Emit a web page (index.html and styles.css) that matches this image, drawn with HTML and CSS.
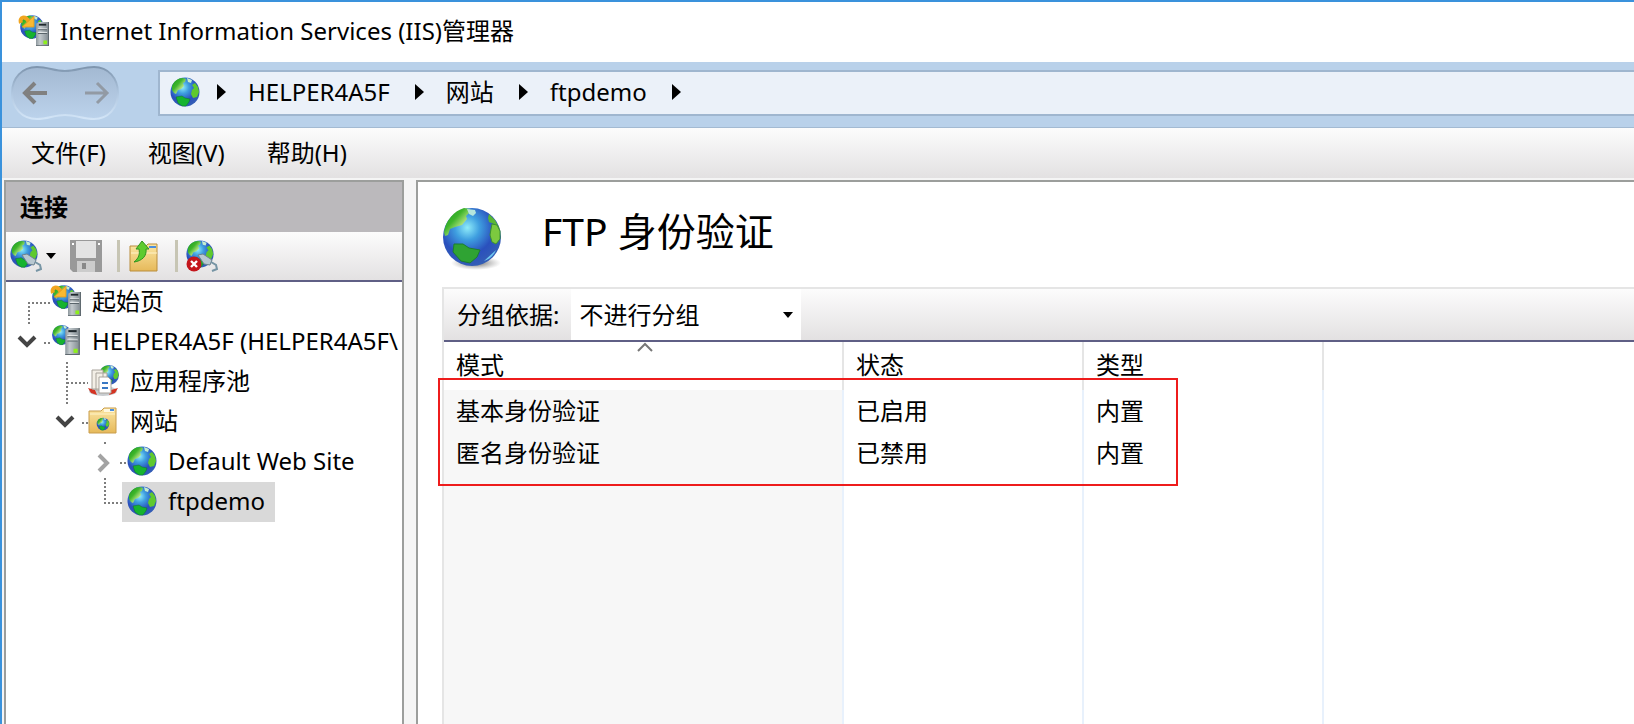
FILE: index.html
```html
<!DOCTYPE html>
<html lang="zh-CN">
  <head>
    <meta charset="UTF-8">
    <meta name="viewport" content="width=device-width, initial-scale=1.0">
    <title>Internet Information Services (IIS)管理器</title>
    <link rel="stylesheet" href="styles.css">
  </head>
  <body>
    <!-- shared icons -->
    <svg class="sprite" aria-hidden="true">
      <defs>
        <radialGradient id="sea" cx="0.42" cy="0.34" r="0.7">
          <stop offset="0" stop-color="#8fecfa"/>
          <stop offset="0.3" stop-color="#3f9fe0"/>
          <stop offset="0.65" stop-color="#2a50bd"/>
          <stop offset="1" stop-color="#3560b4"/>
        </radialGradient>
        <linearGradient id="land" x1="0" y1="0" x2="1" y2="1">
          <stop offset="0" stop-color="#169a1c"/>
          <stop offset="0.4" stop-color="#3fb52c"/>
          <stop offset="0.7" stop-color="#c4ea8e"/>
          <stop offset="1" stop-color="#3fae2c"/>
        </linearGradient>
        <linearGradient id="metal" x1="0" y1="0" x2="1" y2="0">
          <stop offset="0" stop-color="#8d979d"/>
          <stop offset="0.3" stop-color="#c3cacd"/>
          <stop offset="1" stop-color="#7e888e"/>
        </linearGradient>
        <linearGradient id="paper" x1="0" y1="0" x2="0" y2="1">
          <stop offset="0" stop-color="#fbe6a4"/>
          <stop offset="1" stop-color="#e6b95a"/>
        </linearGradient>
        <radialGradient id="shade">
          <stop offset="0" stop-color="#555" stop-opacity="0.9"/>
          <stop offset="1" stop-color="#888" stop-opacity="0"/>
        </radialGradient>
      </defs>
      <symbol id="globe" viewBox="-1 -1 32 32">
        <circle cx="15" cy="15" r="14.5" fill="url(#sea)"/>
        <path d="M2 9C4 4 8 1 13 1l3 1-1 3-2 1 1 3-3 3-3 1-2 4-2-1-2-3z" fill="url(#land)"/>
        <path d="M17 1l5 2-1 3-3-1z" fill="#c6eed0"/>
        <path d="M22 8l3-2 3 4 1 5-2 5-4 1-2-4 1-4 2-2z" fill="#5fc92e"/>
        <path d="M6 20l6-1 3 2 5 1-1 3-3 4-4 0-4-3z" fill="#16b32f" stroke="#12702f" stroke-width="0.5"/>
      </symbol>
      <symbol id="server" viewBox="0 0 14 28">
        <path d="M0 3l3-2h11v26H0z" fill="url(#metal)"/>
        <path d="M13 1h1v26H0v-1h13z" fill="#5e686e"/>
        <path d="M3 3h8v2H3z" fill="#20292e"/>
        <path d="M2 8h10v1H2zM2 12h10v1H2z" fill="#f1f3f4"/>
        <path d="M2 9h10v1H2zM2 13h10v1H2z" fill="#59646a"/>
        <path d="M8 21h4v4H8z" fill="#8df01b"/>
      </symbol>
      <symbol id="start" viewBox="0 0 32 32">
        <use href="#globe" x="1" y="-1" width="26" height="26"/>
        <path d="M3 8C1 2 7 0 11 7" fill="none" stroke="#f2a51f" stroke-width="4"/>
        <path d="M16 1v11H4z" fill="#f9b932" stroke="#e0951a" stroke-width="0.8"/>
        <use href="#server" x="17" y="6" width="15" height="26"/>
      </symbol>
      <symbol id="host" viewBox="0 0 32 32">
        <use href="#globe" x="1" y="-1" width="22" height="22"/>
        <use href="#server" x="15" y="2" width="15" height="29"/>
      </symbol>
      <symbol id="pool" viewBox="0 0 32 32">
        <use href="#globe" x="10" y="-1" width="22" height="22"/>
        <ellipse cx="15" cy="26" rx="14" ry="5" fill="#c9cdd0"/>
        <path d="M0 23l7 2 2 5-6-2zM30 23l-7 2-2 5 6-2z" fill="#d43322"/>
        <path d="M4 5h11v19H4zM8 8h11v17H8z" fill="#f3efe7" stroke="#a8a39b"/>
        <path d="M11 12h9l3 3v13H11z" fill="#fff" stroke="#a8a39b"/>
        <path d="M14 17h6v2h-6zM14 22h6v2h-6z" fill="#3a78c4"/>
      </symbol>
      <symbol id="sites" viewBox="0 0 32 32">
        <path d="M1 6h12l3-3h12v25H1z" fill="url(#paper)" stroke="#c99d4c"/>
        <path d="M16 4h10v3H16z" fill="#fff8df"/>
        <path d="M22 4h4v2h-4z" fill="#4a8ede"/>
        <path d="M2 9h25" stroke="#fff3c8"/>
        <use href="#globe" x="8" y="12" width="14" height="14"/>
      </symbol>
      <symbol id="plug" viewBox="0 0 32 32">
        <use href="#globe" x="-1" y="-1" width="30" height="30"/>
        <path d="M12 15l5-1 9 6-2 5-6-1z" fill="#b9c8d1" stroke="#6e828f"/>
        <path d="M25 22l5 3 1 4-5 2" fill="none" stroke="#7795a5" stroke-width="2"/>
      </symbol>
      <symbol id="unplug" viewBox="0 0 32 32">
        <use href="#plug" width="32" height="32"/>
        <circle cx="8" cy="24" r="7.5" fill="#c4161c"/>
        <path d="M5 21l6 6M11 21l-6 6" stroke="#fff" stroke-width="2.4"/>
      </symbol>
      <symbol id="save" viewBox="0 0 32 32">
        <path d="M0 0h32v32H3l-3-3z" fill="#999"/>
        <path d="M6 1h20v17H6z" fill="#e3e3e3"/>
        <path d="M7 21h18v11H7z" fill="#ccc"/>
        <path d="M12 23h4v6h-4z" fill="#888"/>
        <path d="M2 3h2v2H2zM28 3h2v2h-2z" fill="#fff"/>
      </symbol>
      <symbol id="up" viewBox="0 0 32 32">
        <path d="M2 6h16l2-2h9v27H2z" fill="url(#paper)" stroke="#b98d3c"/>
        <path d="M21 6h7v2h-7z" fill="#4a8ede"/>
        <path d="M3 13h26" stroke="#fff3c8"/>
        <path d="M14 1l7 8h-3c1 7-4 12-12 13 5-4 6-8 5-13H8z" fill="#5ecb2f" stroke="#2f9420"/>
      </symbol>
    </svg>

    <div class="window">
      <header class="titlebar">
        <svg class="icon"><use href="#start"/></svg>
        <span>Internet Information Services (IIS)管理器</span>
      </header>

      <nav class="navbar">
        <div class="history">
          <svg class="history-shape" viewBox="0 0 110 56">
            <defs>
              <linearGradient id="rim" x1="0" y1="0" x2="0" y2="1">
                <stop offset="0" stop-color="#7e95ae"/>
                <stop offset="0.5" stop-color="#b0c7e0"/>
                <stop offset="1" stop-color="#d3e5f7"/>
              </linearGradient>
              <linearGradient id="well" x1="0" y1="0" x2="0" y2="1">
                <stop offset="0" stop-color="#a3b9d2"/>
                <stop offset="1" stop-color="#bcd3ec"/>
              </linearGradient>
            </defs>
            <path d="M27 2C38 2 44 6 55 6S73 2 84 2c14 0 24 11 24 26S98 54 84 54c-11 0-18-4-29-4s-17 4-28 4C12 54 2 43 2 28S12 2 27 2z" fill="url(#well)" stroke="url(#rim)" stroke-width="2"/>
          </svg>
          <button class="arrow" aria-label="后退">
            <svg viewBox="0 0 26 24"><path d="M25 12H3M13 2L3 12l10 10" fill="none" stroke="#808080" stroke-width="4"/></svg>
          </button>
          <button class="arrow" aria-label="前进">
            <svg viewBox="0 0 26 24"><path d="M1 12h22M13 2l10 10-10 10" fill="none" stroke="#929aa4" stroke-width="3"/></svg>
          </button>
        </div>
        <div class="address">
          <svg class="icon"><use href="#globe"/></svg>
          <i class="sep"></i>
          <a href="#">HELPER4A5F</a>
          <i class="sep"></i>
          <a href="#">网站</a>
          <i class="sep"></i>
          <a href="#">ftpdemo</a>
          <i class="sep"></i>
        </div>
      </nav>

      <div class="menubar">
        <button>文件(F)</button>
        <button>视图(V)</button>
        <button>帮助(H)</button>
      </div>

      <div class="content">
        <aside class="connections">
          <h2>连接</h2>
          <div class="tools">
            <button class="tool drop" aria-label="连接"><svg class="tool-icon"><use href="#plug"/></svg><i class="down"></i></button>
            <button class="tool" aria-label="保存"><svg class="tool-icon"><use href="#save"/></svg></button>
            <i class="divider"></i>
            <button class="tool" aria-label="向上"><svg class="tool-icon"><use href="#up"/></svg></button>
            <i class="divider"></i>
            <button class="tool" aria-label="断开"><svg class="tool-icon"><use href="#unplug"/></svg></button>
          </div>
          <ul class="tree">
            <li>
              <svg class="branch" viewBox="0 0 44 40"><path class="dots" d="M44 21H23v21"/></svg>
              <span class="node"><svg class="icon"><use href="#start"/></svg>起始页</span>
            </li>
            <li>
              <svg class="branch" viewBox="0 0 44 40"><path class="dots" d="M38 21h6"/><path class="open" d="M13 15l8 8 8-8"/></svg>
              <span class="node"><svg class="icon"><use href="#host"/></svg>HELPER4A5F (HELPER4A5F\</span>
            </li>
            <li class="level2">
              <svg class="branch" viewBox="0 0 44 40"><path class="dots" d="M23 0v42M23 21h21"/></svg>
              <span class="node"><svg class="icon"><use href="#pool"/></svg>应用程序池</span>
            </li>
            <li class="level2">
              <svg class="branch" viewBox="0 0 44 40"><path class="dots" d="M38 21h6"/><path class="open" d="M13 15l8 8 8-8"/></svg>
              <span class="node"><svg class="icon"><use href="#sites"/></svg>网站</span>
            </li>
            <li class="level3">
              <svg class="branch" viewBox="0 0 44 40"><path class="dots" d="M23 0v3M38 21h6"/><path class="closed" d="M17 13l8 8-8 8"/></svg>
              <span class="node"><svg class="icon"><use href="#globe"/></svg>Default Web Site</span>
            </li>
            <li class="level3">
              <svg class="branch" viewBox="0 0 44 40"><path class="dots" d="M23-4v25h21"/></svg>
              <span class="node selected"><svg class="icon"><use href="#globe"/></svg>ftpdemo</span>
            </li>
          </ul>
        </aside>

        <main class="feature">
          <div class="heading">
            <svg class="big-globe" viewBox="0 0 60 64">
              <ellipse cx="34" cy="56" rx="25" ry="7" fill="url(#shade)"/>
              <circle cx="30" cy="30" r="29" fill="url(#sea)"/>
              <path d="M2 25C4 13 12 4 22 1l6 1-1 4-3 3 1 3-5 6-7 2-5 2-2 6-3 1z" fill="url(#land)"/>
              <path d="M25 2l8 1 1 3-3 3-4-2z" fill="#b5e6dd"/>
              <path d="M47 7l6 6 5 9-6-5-5-2-1-4z" fill="#58b635"/>
              <path d="M50 17l5 1 3 6v8l-4 5-4-2-2-7 1-6z" fill="#7cc93f" stroke="#3b9130"/>
              <path d="M12 37l9 0 6 4 11 2-3 7-7 6-9-2-8-9z" fill="#2fa333" stroke="#1c7d31"/>
              <path d="M42 54l12-11c-2 5-6 9-12 11z" fill="#6fc8f0"/>
            </svg>
            <h1>FTP 身份验证</h1>
          </div>

          <div class="list">
            <div class="groupbar">
              <label for="group">分组依据:</label>
              <span class="combo">
                <select id="group"><option>不进行分组</option></select>
                <i class="down"></i>
              </span>
            </div>
            <table>
              <thead>
                <tr>
                  <th class="sorted">模式<svg class="sort" viewBox="0 0 16 10"><path d="M1 9l7-7 7 7" fill="none" stroke="#777" stroke-width="2"/></svg></th>
                  <th>状态</th>
                  <th>类型</th>
                  <th class="rest"></th>
                </tr>
              </thead>
              <tbody>
                <tr><td>基本身份验证</td><td>已启用</td><td>内置</td><td></td></tr>
                <tr><td>匿名身份验证</td><td>已禁用</td><td>内置</td><td></td></tr>
                <tr class="filler"><td></td><td></td><td></td><td></td></tr>
              </tbody>
            </table>
            <div class="marker"></div>
          </div>
        </main>
      </div>
    </div>
  </body>
</html>
```

FILE: styles.css
```css
* {
  box-sizing: border-box;
}

body {
  margin: 0;
  color: #000;
  font-family: "Noto Sans", "Noto Sans CJK SC", sans-serif;
  font-size: 24px;
  line-height: 32px;
}

button,
select {
  padding: 0;
  border: none;
  background: none;
  color: inherit;
  font: inherit;
}

svg {
  display: block;
  flex: none;
}

.sprite {
  position: absolute;
  width: 0;
  height: 0;
}

.icon {
  width: 32px;
  height: 32px;
}

.window {
  display: flex;
  flex-direction: column;
  height: 100vh;
  overflow: hidden;
  border-top: 2px solid #3a92dc;
  border-left: 2px solid #3a92dc;
  background: #f5f5f5;
}

.titlebar {
  display: flex;
  align-items: center;
  gap: 10px;
  height: 60px;
  padding: 0 0 2px 16px;
  background: #fff;
}

.navbar {
  display: flex;
  align-items: flex-start;
  gap: 38px;
  height: 66px;
  padding: 3px 0 0 8px;
  border-bottom: 1px solid #a3bad2;
  background: #b9d1ea;
}

.history {
  position: relative;
  display: flex;
  align-items: center;
  justify-content: space-between;
  width: 110px;
  height: 56px;
  padding: 0 10px 0 12px;
}

.history-shape {
  position: absolute;
  top: 0;
  left: 0;
  width: 110px;
  height: 56px;
}

.arrow {
  position: relative;
  width: 26px;
  height: 24px;
}

.address {
  display: flex;
  flex: 1;
  align-items: center;
  height: 46px;
  margin-top: 5px;
  padding: 0 0 2px 9px;
  border: 2px solid #9fb6cf;
  border-right: none;
  background: #ebf1f9;
}

.address a {
  color: #000;
  text-decoration: none;
}

.sep {
  margin: 0 22px 0 25px;
  border: 8px solid transparent;
  border-right: none;
  border-left: 9px solid #000;
}

.address .icon + .sep {
  margin-left: 16px;
}

.menubar {
  display: flex;
  gap: 42px;
  height: 50px;
  padding-left: 29px;
  background: linear-gradient(#fcfcfc, #e3e1e2);
}

.content {
  display: flex;
  flex: 1;
  gap: 12px;
  min-height: 0;
  padding: 2px 0 0 2px;
}

.connections {
  display: flex;
  flex: none;
  flex-direction: column;
  width: 400px;
  border: 2px solid #9c9e9c;
  border-bottom: none;
  background: #fff;
}

.connections h2 {
  margin: 0;
  padding: 9px 14px;
  background: #bbb9bc;
  font-size: 24px;
  font-weight: 700;
}

.tools {
  display: flex;
  align-items: center;
  height: 50px;
  padding-left: 4px;
  border-bottom: 2px solid #5f5f85;
  background: linear-gradient(#fcfcfc, #e3e1e2);
}

.tool {
  display: flex;
  align-items: center;
}

.tool-icon {
  width: 32px;
  height: 32px;
}

.drop {
  gap: 4px;
  margin-right: 14px;
}

.down {
  border: 5px solid transparent;
  border-top: 6px solid #000;
  border-bottom: none;
}

.divider {
  width: 3px;
  height: 32px;
  margin: 0 8px 0 15px;
  background: #c7c5b4;
}

.tree {
  margin: 0;
  padding: 0;
  overflow: hidden;
  list-style: none;
}

.tree li {
  display: flex;
  height: 40px;
  white-space: nowrap;
}

.level2 {
  padding-left: 38px;
}

.level3 {
  padding-left: 76px;
}

/* the connector reaches under the node's left padding */
.branch {
  width: 44px;
  height: 40px;
  margin-right: -4px;
  overflow: visible;
}

.dots {
  fill: none;
  stroke: #7d7d7d;
  stroke-width: 2;
  stroke-dasharray: 2 2;
}

.open,
.closed {
  fill: none;
  stroke: #444;
  stroke-width: 4;
}

.closed {
  stroke: #a3a3a3;
}

.node {
  display: flex;
  align-items: center;
  gap: 10px;
  padding: 0 10px 2px 4px;
}

.selected {
  background: #d9d9d9;
}

.feature {
  display: flex;
  flex: 1;
  flex-direction: column;
  min-width: 0;
  padding: 25px 0 0 24px;
  border-top: 2px solid #9c9e9c;
  border-left: 2px solid #9c9e9c;
  background: #fff;
}

.heading {
  display: flex;
  gap: 40px;
  height: 80px;
}

.big-globe {
  width: 60px;
  height: 64px;
}

.heading h1 {
  margin: 0;
  font-size: 39px;
  font-weight: 400;
  line-height: 48px;
}

.list {
  position: relative;
  display: flex;
  flex: 1;
  flex-direction: column;
  border-top: 2px solid #e5e5e5;
  border-left: 2px solid #e5e5e5;
}

.groupbar {
  display: flex;
  align-items: center;
  height: 53px;
  padding-left: 13px;
  border-bottom: 2px solid #5f5f85;
  background: linear-gradient(#fcfcfc, #e3e1e2);
}

.combo {
  display: flex;
  align-items: center;
  width: 230px;
  height: 100%;
  margin-left: 12px;
  padding: 0 8px;
  background: #fff;
}

.combo select {
  flex: 1;
  appearance: none;
}

table {
  flex: 1;
  width: 100%;
  border-collapse: collapse;
  table-layout: fixed;
}

th,
td {
  height: 42px;
  padding: 0 12px;
  border-right: 2px solid #e8f1fc;
  text-align: left;
}

th {
  position: relative;
  width: 240px;
  height: 48px;
  padding-bottom: 2px;
  border-right-color: #e5e5e5;
  font-weight: 400;
}

.sorted {
  width: 399px;
}

.rest {
  width: auto;
}

th:last-child,
td:last-child {
  border-right: none;
}

td:first-child {
  background: #f7f7f7;
}

.filler td {
  height: auto;
}

.sort {
  position: absolute;
  top: 0;
  left: 50%;
  width: 16px;
  height: 10px;
  margin-left: -6px;
}

/* red frame drawn over the authentication rows */
.marker {
  position: absolute;
  top: 89px;
  left: -6px;
  width: 740px;
  height: 108px;
  border: 2px solid #ee1c1c;
}
```
